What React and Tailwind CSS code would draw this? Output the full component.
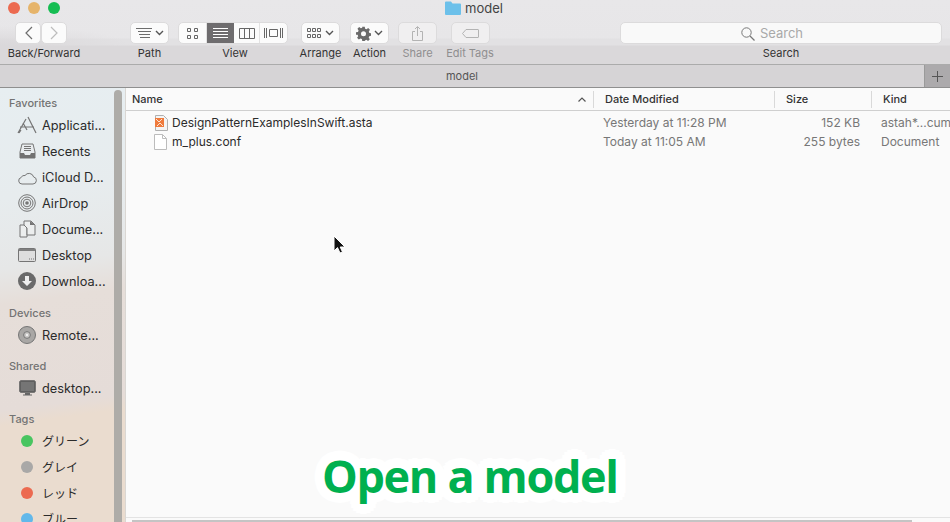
import React from "react";

const font = { fontFamily: '"Inter", "Noto Sans CJK JP", sans-serif' };

function Btn({ w, children, dim }) {
  return (
    <div className={`flex h-[22px] items-center justify-center rounded-[5px] border border-[#dcdbdc] ${dim ? "bg-[#f0eff0]" : "bg-[#fbfbfb]"}`} style={{ width: w }}>
      {children}
    </div>
  );
}
function Chev() {
  return (
    <svg width="9" height="6" viewBox="0 0 9 6" className="ml-[3px]"><path d="M1 1l3.5 3.5L8 1" fill="none" stroke="#555" strokeWidth="1.4" /></svg>
  );
}
function Tool({ w, ml, label, dim, children }) {
  return (
    <div className="flex shrink-0 flex-col items-center" style={{ width: w, marginLeft: ml }}>
      {children}
      <div className={`mt-[2px] h-[14px] whitespace-nowrap text-[11px] leading-[14px] ${dim ? "text-[#8f8e8f]" : "text-[#333]"}`}>{label}</div>
    </div>
  );
}

const s = { fill: "none", stroke: "#757575", strokeWidth: 1 };
const Ic = {
  apps: (
    <svg width="20" height="18" viewBox="0 0 20 18"><path d="M1 17L9 3M3 11h14M19 17L11 1M6 7l4 7M4 14l-2 3" {...s} strokeWidth="1.2" /></svg>
  ),
  recents: (
    <svg width="17" height="16" viewBox="0 0 17 16"><path d="M3 1h11l2 8v6H1V9z" fill="#e8ecee" stroke="#757575" /><path d="M1 10h4l1 2h5l1-2h4v5H1z" fill="#717171" /><path d="M5 3.500h7M5 5.500h7M5 7.500h7" {...s} /></svg>
  ),
  cloud: (
    <svg width="19" height="15" viewBox="0 0 19 15"><path d="M4 14a3.300 3.300 0 0 1-.8-6.500A3.300 3.300 0 0 1 7 5.500a4.800 4.800 0 0 1 8.600 1.400A3.600 3.600 0 0 1 15 14z" {...s} /></svg>
  ),
  airdrop: (
    <svg width="18" height="18" viewBox="0 0 18 18"><circle cx="9" cy="9" r="8.300" {...s} /><circle cx="9" cy="9" r="6" {...s} /><circle cx="9" cy="9" r="3.800" {...s} /><circle cx="9" cy="9" r="1.800" fill="#757575" /></svg>
  ),
  docs: (
    <svg width="17" height="18" viewBox="0 0 17 18"><path d="M1 5h4l3 3v9H1z" fill="#eceeee" stroke="#757575" /><path d="M7 1h5l4 4v10H8V8L5 5V1z" fill="#eceeee" stroke="#757575" /><path d="M11 1v4h5z" fill="#757575" /></svg>
  ),
  desktop: (
    <svg width="18" height="14" viewBox="0 0 18 14"><rect x="0.5" y="0.5" width="17" height="13" rx="1" fill="#dedede" stroke="#757575" /><rect x="1" y="1" width="16" height="2" fill="#808080" /><path d="M11 11h1M13 11h1M15 11h1" stroke="#757575" /></svg>
  ),
  down: (
    <svg width="18" height="18" viewBox="0 0 18 18"><circle cx="9" cy="9" r="9" fill="#6a6a6a" /><path d="M7 4h4v5h3l-5 5-5-5h3z" fill="#eee" /></svg>
  ),
  disc: (
    <svg width="18" height="18" viewBox="0 0 18 18"><circle cx="9" cy="9" r="8.500" fill="#a9a7a5" stroke="#757575" /><circle cx="9" cy="9" r="3.400" fill="#c6c4c2" stroke="#777" /><circle cx="9" cy="9" r="1.200" fill="#eee" /></svg>
  ),
  mon: (
    <svg width="17" height="16" viewBox="0 0 17 16"><rect x="0.7" y="0.7" width="15.600" height="11.600" rx="1.200" fill="#5e5e5e" stroke="#666" /><rect x="2" y="2" width="13" height="9" fill="#757575" /><path d="M6 13h5v1.500H6zM4 14.600h9v1H4z" fill="#666" /></svg>
  ),
};

function Sec({ label, mt, children }) {
  return (
    <div style={{ marginTop: mt }}>
      <div className="h-[18px] pl-[9px] text-[11px] font-medium leading-[18px] text-[#737373]">{label}</div>
      {children}
    </div>
  );
}
function Item({ icon, jp, children }) {
  return (
    <div className="flex h-[26px] items-center">
      <div className="flex w-[42px] shrink-0 justify-center pl-[12px]">{icon}</div>
      <div className={`whitespace-nowrap pt-[1px] leading-[25px] text-[#2b2b2b] ${jp ? "text-[12px]" : "text-[12.75px]"}`}>{children}</div>
    </div>
  );
}
function Dot({ c }) {
  return <div className="h-[12px] w-[12px] rounded-full" style={{ background: c }} />;
}
function Row({ icon, name, date, size, kind }) {
  return (
    <div className="flex h-[19px] items-center text-[12px] leading-[19px] text-[#777]">
      <div className="flex w-[467px] shrink-0 items-center pl-[28px]">
        <div className="flex w-[18px] shrink-0 justify-start">{icon}</div>
        <span className="text-[12px] text-[#2b2b2b]">{name}</span>
      </div>
      <div className="w-[181px] shrink-0 pl-[10px]">{date}</div>
      <div className="w-[97px] shrink-0 pr-[11px] text-right">{size}</div>
      <div className="w-[80px] shrink-0 whitespace-nowrap pl-[10px]">{kind}</div>
    </div>
  );
}
function Head({ w, label, pl, children, last }) {
  return (
    <div className={`relative flex h-[17px] shrink-0 items-center text-[11px] font-medium text-[#333] ${last ? "" : "border-r border-[#d9d9d9]"}`} style={{ width: w, paddingLeft: pl }}>
      {label}
      {children}
    </div>
  );
}

export default function App() {
  return (
    <div style={font} className="relative h-[522px] w-[950px] overflow-hidden bg-[#fafafa]">
      <header className="h-[65px] border-b border-[#ababab] bg-[radial-gradient(ellipse_130px_20px_at_0_46px,#dad8da,transparent),linear-gradient(180deg,#e8e7e9_0,#e7e6e8_38px,#e2e1e3_39px,#e2e1e3_45px,#dad8da_46px)]">
        <div className="flex h-[16px] items-start pt-[1px]">
          <div className="flex w-[445px] shrink-0 gap-[8px] pl-[8px] pt-[1px]">
            <div className="h-[12px] w-[12px] rounded-full bg-[#ec6a50]" />
            <div className="h-[12px] w-[12px] rounded-full bg-[#e6b46a]" />
            <div className="h-[12px] w-[12px] rounded-full bg-[#16bd53]" />
          </div>
          <svg width="16" height="14" viewBox="0 0 16 14"><path d="M0 1.500A1 1 0 0 1 1 .5h5l1.500 2H15a1 1 0 0 1 1 1V13a1 1 0 0 1-1 1H1a1 1 0 0 1-1-1z" fill="#6cc0ea" /></svg>
          <div className="ml-[4px] text-[13px] leading-[14px] text-[#444]">model</div>
        </div>
        <div className="mt-[6px] flex items-start">
          <Tool w={72} ml={8} label="Back/Forward">
            <div className="ml-[-6px] flex">
              <Btn w={26}><svg width="9" height="14" viewBox="0 0 9 14"><path d="M8 1L2 7l6 6" fill="none" stroke="#6e6e6e" strokeWidth="1.2" /></svg></Btn>
              <Btn w={26}><svg width="9" height="14" viewBox="0 0 9 14"><path d="M1 1l6 6-6 6" fill="none" stroke="#bdbdbd" strokeWidth="1.2" /></svg></Btn>
            </div>
          </Tool>
          <Tool w={39} ml={50} label="Path">
            <Btn w={39}>
              <svg width="16" height="10" viewBox="0 0 16 10"><path d="M0 .5h2M2 .5h14M2 3.500h13M3 6.500h11M4 9.500h10" fill="none" stroke="#6d6d6d" /></svg>
              <Chev />
            </Btn>
          </Tool>
          <Tool w={114} ml={9} label="View">
            <div className="flex h-[22px] w-[110px] self-start overflow-hidden rounded-[5px] border border-[#dcdbdc] bg-[#fbfbfb]">
              <div className="flex w-[28px] items-center justify-center border-r border-[#e2e2e2]">
                <svg width="11" height="11" viewBox="0 0 11 11"><path d="M.5.5h3v3h-3zM7.500.5h3v3h-3zM.5 7.500h3v3h-3zM7.500 7.500h3v3h-3z" fill="none" stroke="#666" /></svg>
              </div>
              <div className="flex w-[27px] items-center justify-center bg-[#6e6c6e]">
                <svg width="15" height="10" viewBox="0 0 15 10"><path d="M0 .5h15M0 3.500h15M0 6.500h15M0 9.500h15" stroke="#fff" /></svg>
              </div>
              <div className="flex w-[26px] items-center justify-center border-r border-[#e2e2e2]">
                <svg width="16" height="11" viewBox="0 0 16 11"><path d="M.5.5h15v10H.5zM5.500.5v10M10.500.5v10" fill="none" stroke="#666" /></svg>
              </div>
              <div className="flex flex-1 items-center justify-center">
                <svg width="19" height="10" viewBox="0 0 19 10"><path d="M.5 0v10M2.500 0v10M16.500 0v10M18.500 0v10M5.500 1.500h8v7h-8z" fill="none" stroke="#666" /></svg>
              </div>
            </div>
          </Tool>
          <Tool w={39} ml={9} label="Arrange">
            <Btn w={39}>
              <svg width="15" height="11" viewBox="0 0 15 11"><path d="M.5.5h3v3h-3zM5.500.5h3v3h-3zM10.500.5h3v3h-3zM.5 6.500h3v3h-3zM5.500 6.500h3v3h-3zM10.500 6.500h3v3h-3z" fill="none" stroke="#666" /></svg>
              <Chev />
            </Btn>
          </Tool>
          <Tool w={39} ml={10} label="Action">
            <Btn w={39}>
              <svg width="15" height="15" viewBox="0 0 24 24"><path fill="#6a6a6a" fillRule="evenodd" d="M10 1h4l.6 3.200 2.200.9L19.500 3.300l2.800 2.800-1.800 2.700.9 2.200 3 .6v4l-3.200.6-.9 2.200 1.800 2.700-2.800 2.800-2.700-1.800-2.200.9L14 24h-4l-.6-3.200-2.200-.9-2.700 1.800-2.800-2.800 1.800-2.700-.9-2.200L0 14v-4l3.200-.6.900-2.200L2.300 4.500l2.800-2.800 2.700 1.800 2.200-.9zM12 8.500a4 4 0 1 0 0 8 4 4 0 0 0 0-8z" /></svg>
              <Chev />
            </Btn>
          </Tool>
          <Tool w={39} ml={9} label="Share" dim>
            <Btn w={39} dim>
              <svg width="11" height="15" viewBox="0 0 11 15"><path d="M3 5.500H.5v9h10v-9H8M5.500 10V1M3 3l2.500-2.500L8 3" fill="none" stroke="#b3b3b3" /></svg>
            </Btn>
          </Tool>
          <Tool w={48} ml={9} label="Edit Tags" dim>
            <Btn w={39} dim>
              <svg width="17" height="9" viewBox="0 0 17 9"><path d="M4 .5h12a.5.5 0 0 1 .5.500v7a.5.5 0 0 1-.5.500H4L.5 4.500z" fill="none" stroke="#b3b3b3" /></svg>
            </Btn>
          </Tool>
          <Tool w={322} ml={126} label="Search">
            <div className="flex h-[22px] w-[322px] items-center justify-center rounded-[5px] border border-[#dcdbdc] bg-[#f9f9f9] pr-[18px] pt-[1px] text-[13px] text-[#a9a9a9]">
              <svg width="14" height="14" viewBox="0 0 14 14" className="mr-[5px]"><circle cx="5.500" cy="5.500" r="4.700" fill="none" stroke="#777" /><path d="M9 9l4.500 4.500" stroke="#777" strokeWidth="1.2" /></svg>
              Search
            </div>
          </Tool>
        </div>
      </header>

      <div className="flex h-[23px] border-b border-[#8f8f8f] bg-[#d6d4d6]">
        <div className="flex-1 text-center text-[11px] leading-[23px] text-[#555]">model</div>
        <div className="flex w-[26px] items-center justify-center border-l border-[#9a9a9a] bg-[#acaaac]">
          <svg width="11" height="11" viewBox="0 0 11 11"><path d="M5.500 0v11M0 5.500h11" stroke="#555" /></svg>
        </div>
      </div>

      <div className="flex h-[434px]">
        <aside className="relative w-[126px] shrink-0 overflow-hidden border-r border-[#dad7d3] bg-[linear-gradient(172deg,#e7eef1_0,#e7ecee_110px,#e6e7e7_180px,#e6ded9_215px,#e5dcd8_320px,#eadccf_335px,#eadccf_460px)] pt-[6px]">
          <div className="absolute bottom-0 left-[114px] top-[2px] w-[8px] rounded-t-[4px] bg-[#aeaca8]" />
          <Sec label="Favorites" mt={0}>
            <Item icon={Ic.apps}>Applicati...</Item>
            <Item icon={Ic.recents}>Recents</Item>
            <Item icon={Ic.cloud}>iCloud D...</Item>
            <Item icon={Ic.airdrop}>AirDrop</Item>
            <Item icon={Ic.docs}>Docume...</Item>
            <Item icon={Ic.desktop}>Desktop</Item>
            <Item icon={Ic.down}>Downloa...</Item>
          </Sec>
          <Sec label="Devices" mt={10}>
            <Item icon={Ic.disc}>Remote...</Item>
          </Sec>
          <Sec label="Shared" mt={9}>
            <Item icon={Ic.mon}>desktop...</Item>
          </Sec>
          <Sec label="Tags" mt={9}>
            <Item jp icon={<Dot c="#48c560" />}>グリーン</Item>
            <Item jp icon={<Dot c="#a9a8a7" />}>グレイ</Item>
            <Item jp icon={<Dot c="#ec6a50" />}>レッド</Item>
            <Item jp icon={<Dot c="#62b8ea" />}>ブルー</Item>
          </Sec>
        </aside>

        <main className="min-w-0 flex-1">
          <div className="flex h-[23px] items-center border-b border-[#cfcfcf] pt-[1px]">
            <Head w={468} label="Name" pl={6}>
              <svg width="8" height="5" viewBox="0 0 8 5" className="absolute right-[7px] top-[6px]"><path d="M.5 4.500L4 1l3.500 3.500" fill="none" stroke="#555" strokeWidth="1.200" /></svg>
            </Head>
            <Head w={181} label="Date Modified" pl={11} />
            <Head w={97} label="Size" pl={11} />
            <Head w={78} label="Kind" pl={11} last />
          </div>
          <div className="pt-[2px]">
            <Row
              icon={
                <svg width="14" height="16" viewBox="0 0 14 16">
                  <path d="M1.500.5h8l4 4v11h-12z" fill="#f4f4f4" stroke="#b0b0b0" />
                  <rect x="1" y="3" width="9" height="9" fill="#ef7a3c" />
                  <path d="M2 4l3 3 3-3M3 11l3-3 3 3" fill="none" stroke="#fbe3d2" />
                </svg>
              }
              name="DesignPatternExamplesInSwift.asta"
              date="Yesterday at 11:28 PM"
              size="152 KB"
              kind="astah*...cument"
            />
            <Row
              icon={
                <svg width="13" height="16" viewBox="0 0 13 16"><path d="M.5.5h8l4 4v11H.5z" fill="#fff" stroke="#bcbcbc" /><path d="M8.500.5v4h4" fill="none" stroke="#bcbcbc" /></svg>
              }
              name="m_plus.conf"
              date="Today at 11:05 AM"
              size="255 bytes"
              kind="Document"
            />
          </div>
        </main>
      </div>

      <div className="absolute bottom-0 left-[126px] right-0 h-[5px] border-t border-[#e3e3e3]">
        <div className="ml-[6px] mt-[2px] h-[2px] w-[780px] bg-[#c4c4c4]" />
      </div>

      <svg width="14" height="20" viewBox="0 0 14 20" className="absolute left-[333px] top-[235px]">
        <path d="M1 1v15l3.500-3.400L7 18l2.500-1-2.300-5H12z" fill="#111" stroke="#fff" strokeWidth="1" />
      </svg>

      <div
        style={{ fontFamily: '"Open Sans", sans-serif' }}
        className="absolute left-[322px] top-[445px] whitespace-nowrap text-[45px] font-bold leading-[61px] tracking-[-1.35px] text-[#00b04f] [text-shadow:10px_0_0_#fff,-10px_0_0_#fff,0_10px_0_#fff,0_-10px_0_#fff,7px_7px_0_#fff,-7px_7px_0_#fff,7px_-7px_0_#fff,-7px_-7px_0_#fff,5px_0_0_#fff,-5px_0_0_#fff,0_5px_0_#fff,0_-5px_0_#fff,4px_4px_0_#fff,-4px_4px_0_#fff,4px_-4px_0_#fff,-4px_-4px_0_#fff,9px_4px_0_#fff,-9px_4px_0_#fff,9px_-4px_0_#fff,-9px_-4px_0_#fff,4px_9px_0_#fff,-4px_9px_0_#fff,4px_-9px_0_#fff,-4px_-9px_0_#fff]"
      >
        Open a model
      </div>
    </div>
  );
}
